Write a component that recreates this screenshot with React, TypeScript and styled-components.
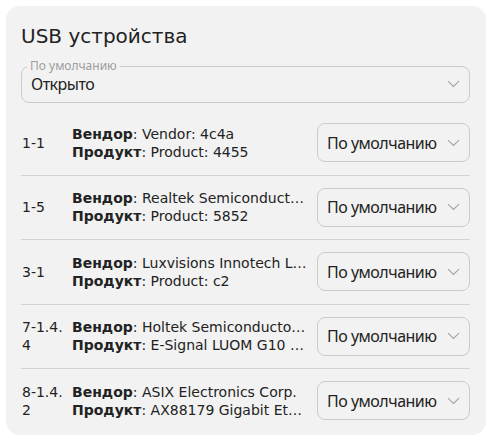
import styled, { createGlobalStyle } from 'styled-components';

const GlobalStyle = createGlobalStyle`
	html, body {
		margin: 0;
		padding: 0;
		background: #ffffff;
	}
	body {
		font-family: 'DejaVu Sans', sans-serif;
		color: #222222;
	}
`;

const Page = styled.div`
	padding: 6px;
	width: 480px;
`;

const Card = styled.section`
	background: #f2f2f2;
	border-radius: 14px;
	padding: 18px 16px 2px 15px;
`;

const Title = styled.h2`
	margin: 0 0 11px;
	font-family: 'DejaVu Sans', sans-serif;
	font-size: 20px;
	font-weight: 400;
	line-height: 24px;
	color: #222;
`;

const Field = styled.fieldset`
	margin: 0;
	padding: 0 9px 7px 9px;
	border: 1px solid #cbcbcb;
	border-radius: 8px;
	display: block;
	min-width: 0;
`;

const Legend = styled.legend`
	padding: 0 3px;
	margin-left: -4px;
	font-family: 'Noto Sans', sans-serif;
	font-size: 12px;
	line-height: 14px;
	color: #9d9d9d;
`;

const FieldValue = styled.div`
	display: flex;
	align-items: center;
	justify-content: space-between;
	font-family: 'Noto Sans', sans-serif;
	font-size: 16px;
	letter-spacing: -0.5px;
	line-height: 22px;
	color: #222;
`;

const List = styled.div`
	margin-top: 8px;
	display: flex;
	flex-direction: column;
`;

const Row = styled.div<{ $last?: boolean }>`
	display: grid;
	grid-template-columns: 42px 1fr 153px;
	column-gap: 9px;
	align-items: center;
	padding: 12px 0 12.5px;
	border-bottom: ${({ $last }) => ($last ? 'none' : '1px solid #d3d3d3')};
`;

const Port = styled.div`
	font-size: 14px;
	line-height: 18px;
	padding-left: 1px;
	word-break: break-all;
`;

const Info = styled.div`
	min-width: 0;
	font-size: 14px;
	line-height: 18px;
`;

const Line = styled.div`
	white-space: nowrap;
	overflow: hidden;
	text-overflow: ellipsis;

	b {
		font-weight: 700;
	}
`;

const SelectBox = styled.div`
	height: 39px;
	box-sizing: border-box;
	border: 1px solid #cbcbcb;
	border-radius: 8px;
	padding: 0 9px 0 9px;
	display: flex;
	align-items: center;
	justify-content: space-between;
	font-family: 'Noto Sans', sans-serif;
	font-size: 16px;
	letter-spacing: -0.5px;
	color: #222;
`;

const Chevron = () => (
	<svg width="13" height="8" viewBox="0 0 13 8" fill="none">
		<polyline points="1,1.2 6.5,6.5 12,1.2" stroke="#a3a3a3" strokeWidth="1.1" />
	</svg>
);

const devices = [
	{ port: '1-1', vendor: 'Vendor: 4c4a', product: 'Product: 4455' },
	{ port: '1-5', vendor: 'Realtek Semiconductor Corp.', product: 'Product: 5852' },
	{ port: '3-1', vendor: 'Luxvisions Innotech Limited', product: 'Product: c2' },
	{ port: '7-1.4.4', vendor: 'Holtek Semiconductor, Inc.', product: 'E-Signal LUOM G10 Mouse' },
	{ port: '8-1.4.2', vendor: 'ASIX Electronics Corp.', product: 'AX88179 Gigabit Ethernet' },
];

export default function App() {
	return (
		<Page>
			<GlobalStyle />
			<Card>
				<Title>USB устройства</Title>
				<Field>
					<Legend>По умолчанию</Legend>
					<FieldValue>
						<span>Открыто</span>
						<Chevron />
					</FieldValue>
				</Field>
				<List>
					{devices.map((d, i) => (
						<Row key={d.port} $last={i === devices.length - 1}>
							<Port>{d.port.length > 6 ? d.port.slice(0, 6) + '\u200b' + d.port.slice(6) : d.port}</Port>
							<Info>
								<Line>
									<b>Вендор</b>: {d.vendor}
								</Line>
								<Line>
									<b>Продукт</b>: {d.product}
								</Line>
							</Info>
							<SelectBox>
								<span>По умолчанию</span>
								<Chevron />
							</SelectBox>
						</Row>
					))}
				</List>
			</Card>
		</Page>
	);
}
